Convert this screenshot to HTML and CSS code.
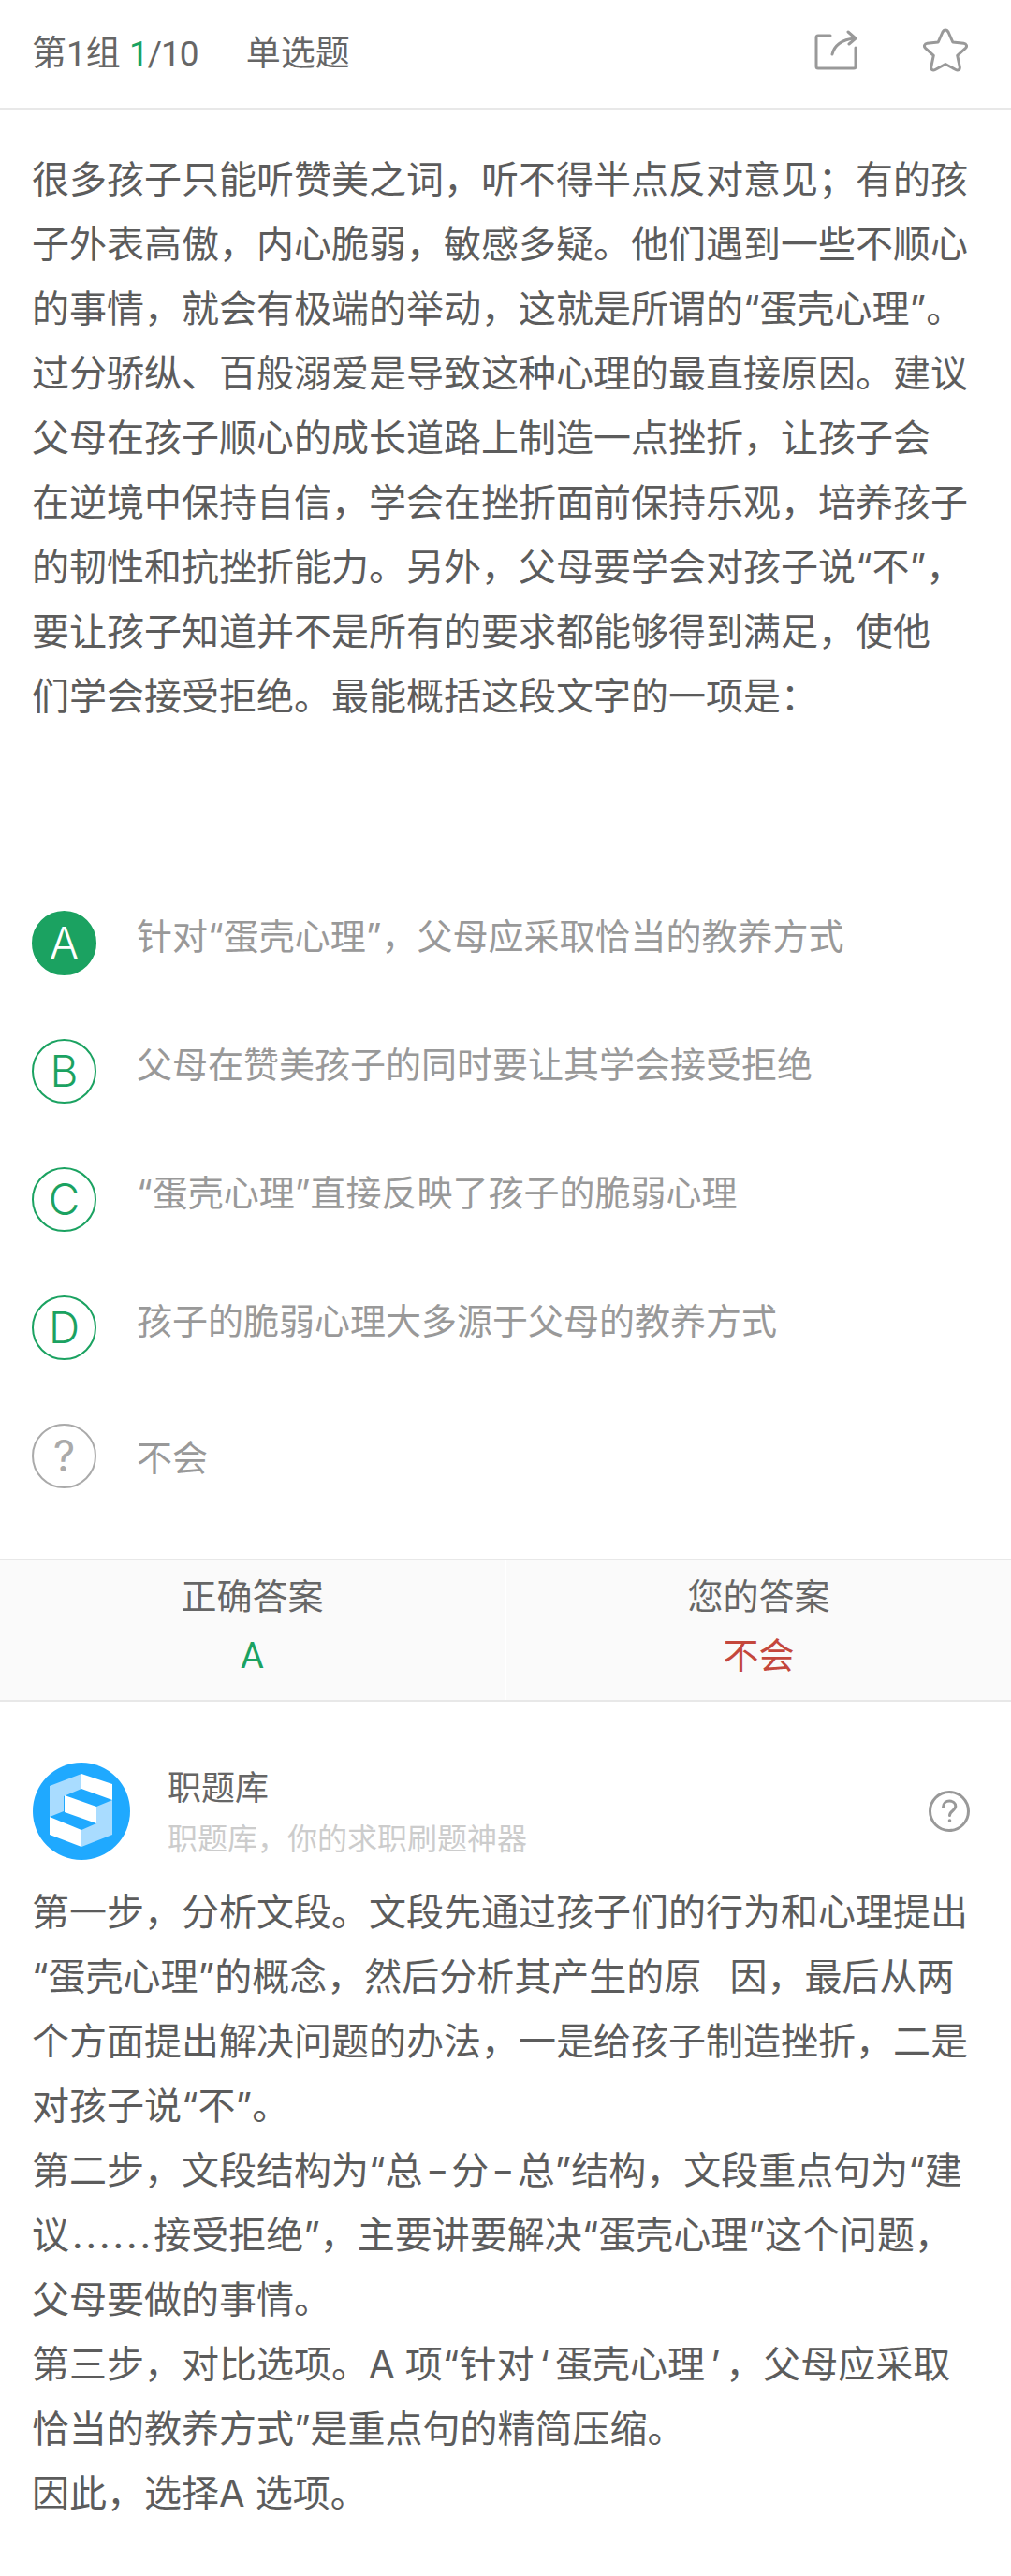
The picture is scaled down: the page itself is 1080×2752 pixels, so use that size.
FILE: index.html
```html
<!DOCTYPE html>
<html lang="zh-CN">
<head>
    <meta charset="UTF-8">
    <meta name="viewport" content="width=device-width, initial-scale=1.0">
    <title>第1组 单选题</title>
    <link rel="stylesheet" href="styles.css">
</head>
<body>

    <div class="top-bar">
        <div class="top-title">第1组 <span class="progress"><em>1</em>/10</span><span class="kind">单选题</span></div>
        <div class="top-icons">
            <svg class="share-icon" viewBox="0 0 46 44" width="46" height="44">
                <path d="M17 6H4a2 2 0 0 0-2 2v31a2 2 0 0 0 2 2h38a2 2 0 0 0 2-2V19"/>
                <path d="M19 26c2-9 10-16 24-17"/>
                <path d="M36 2l8 7-7 6"/>
            </svg>
            <svg class="star-icon" viewBox="0 0 52 50" width="52" height="50">
                <path d="M26 3c1.500 0 2.500 1 3.200 2.500l4.600 10.500 11.700 1.300c3 .4 4 3 2 5l-8.800 8 2.500 12c.6 3-1.600 4.600-4.200 3.200L26 39.500 15 45.500c-2.600 1.400-4.800-.2-4.200-3.200l2.500-12-8.800-8c-2-2-1-4.600 2-5l11.700-1.300 4.600-10.500C23.500 4 24.500 3 26 3z"/>
            </svg>
        </div>
    </div>

    <p class="question">很多孩子只能听赞美之词，听不得半点反对意见；有的孩<br>子外表高傲，内心脆弱，敏感多疑。他们遇到一些不顺心<br>的事情，就会有极端的举动，这就是所谓的“蛋壳心理”。<br>过分骄纵、百般溺爱是导致这种心理的最直接原因。建议<br>父母在孩子顺心的成长道路上制造一点挫折，让孩子会<br>在逆境中保持自信，学会在挫折面前保持乐观，培养孩子<br>的韧性和抗挫折能力。另外，父母要学会对孩子说“不”，<br>要让孩子知道并不是所有的要求都能够得到满足，使他<br>们学会接受拒绝。最能概括这段文字的一项是：</p>

    <div class="options">
        <div class="option">
            <span class="letter letter-on">A</span>
            <span class="option-text">针对“蛋壳心理”，父母应采取恰当的教养方式</span>
        </div>
        <div class="option">
            <span class="letter">B</span>
            <span class="option-text">父母在赞美孩子的同时要让其学会接受拒绝</span>
        </div>
        <div class="option">
            <span class="letter">C</span>
            <span class="option-text">“蛋壳心理”直接反映了孩子的脆弱心理</span>
        </div>
        <div class="option">
            <span class="letter">D</span>
            <span class="option-text">孩子的脆弱心理大多源于父母的教养方式</span>
        </div>
        <div class="option">
            <span class="letter letter-unknown">?</span>
            <span class="option-text option-text-low">不会</span>
        </div>
    </div>

    <div class="answers">
        <div class="answer">
            <div class="answer-label">正确答案</div>
            <div class="answer-right">A</div>
        </div>
        <div class="answer">
            <div class="answer-label">您的答案</div>
            <div class="answer-wrong">不会</div>
        </div>
    </div>

    <div class="source">
        <svg class="logo" viewBox="0 0 104 104" width="104" height="104">
            <circle cx="52" cy="52" r="52" fill="#1fa9ff"/>
            <polygon fill="#a9dcff" points="18,25 52,12 52,28 33,36 33,52 18,58"/>
            <polygon fill="#fff" points="52,12 85,23 85,40 52,28"/>
            <polygon fill="#fff" points="34,35 68,47 68,65 34,53"/>
            <polygon fill="#a9dcff" points="68,47 85,40 85,77 52,90 52,72 68,65"/>
            <polygon fill="#fff" points="18,58 52,72 52,90 18,77"/>
        </svg>
        <div class="source-info">
            <div class="source-name">职题库</div>
            <div class="source-desc">职题库，你的求职刷题神器</div>
        </div>
        <svg class="help-icon" viewBox="0 0 44 44" width="44" height="44">
            <circle cx="22" cy="22" r="20.500"/>
            <path d="M15.500 17.500c0-4 3-6.500 6.800-6.500 3.700 0 6.500 2.300 6.500 5.600 0 4.900-6.300 5-6.300 10"/>
            <circle class="help-dot" cx="22.500" cy="32" r="1.800"/>
        </svg>
    </div>

    <p class="explain">第一步，分析文段。文段先通过孩子们的行为和心理提出<br>“蛋壳心理”的概念，然后分析其产生的<span class="wide-gap">原 因</span>，最后从两<br>个方面提出解决问题的办法，一是给孩子制造挫折，二是<br>对孩子说“不”。<br>第二步，文段结构为“总<span class="dash">-</span>分<span class="dash">-</span>总”结构，文段重点句为“建<br>议<span class="dots">......</span>接受拒绝”，主要讲要解决“蛋壳心理”这个问题，<br>父母要做的事情。<br>第三步，对比选项。A 项“针对<span class="single-quote">‘</span>蛋壳心理<span class="single-quote">’</span>，父母应采取<br>恰当的教养方式”是重点句的精简压缩。<br>因此，选择A 选项。</p>

</body>
</html>
```

FILE: styles.css
```css
body {
    font-family: Inter, "Noto Sans CJK SC", sans-serif;
    background-color: #fff;
    color: #5c5c5c;
    margin: 0;
    text-spacing-trim: space-all;
}
.top-bar {
    display: flex;
    justify-content: space-between;
    align-items: center;
    height: 117px;
    padding: 0 44px 8px 34px;
    box-sizing: border-box;
    border-bottom: 2px solid #e8e8e8;
}
.top-title {
    font-family: Roboto, "Noto Sans CJK SC", sans-serif;
    font-size: 37px;
    color: #666;
}
.progress {
    letter-spacing: -1px;
}
.progress em {
    font-style: normal;
    color: #1ba261;
}
.kind {
    margin-left: 51px;
    letter-spacing: 0;
}
.top-icons {
    display: flex;
    align-items: center;
    gap: 68px;
}
.top-icons svg, .help-icon {
    fill: none;
    stroke: #999;
    stroke-width: 3;
    stroke-linecap: round;
    stroke-linejoin: round;
}
.question, .explain {
    font-size: 40px;
    line-height: 69px;
    margin: 0;
    padding: 0 34px;
    white-space: nowrap;
}
.question {
    padding-top: 40px;
}
.wide-gap {
    word-spacing: 19px;
}
.single-quote {
    margin: 0 6px;
}
.dash {
    display: inline-block;
    margin: 0 6px;
    font-weight: 500;
    transform: scaleX(1.300);
}
.dots {
    letter-spacing: 3px;
    margin-left: 3px;
}
.options {
    margin-top: 195px;
}
.option {
    display: flex;
    gap: 43px;
    height: 137px;
    padding-left: 34px;
}
.letter {
    width: 69px;
    height: 69px;
    border: 2px solid #1ba261;
    border-radius: 50%;
    box-sizing: border-box;
    color: #1ba261;
    font-size: 46px;
    font-weight: 300;
    line-height: 65px;
    text-align: center;
    flex-shrink: 0;
}
.letter-on {
    background-color: #1ba261;
    color: #fff;
}
.letter-unknown {
    border-color: #aaa;
    color: #aaa;
    font-weight: 400;
}
.option-text {
    font-size: 38px;
    line-height: 54px;
    color: #999;
}
.option-text-low {
    line-height: 72px;
}
.answers {
    display: flex;
    gap: 2px;
    margin-top: 7px;
    height: 149px;
    background-color: #fff;
    border-top: 2px solid #e8e8e8;
    border-bottom: 2px solid #e8e8e8;
}
.answer {
    flex: 1;
    background-color: #fafafa;
    text-align: center;
    font-size: 38px;
    line-height: 63px;
    padding-top: 7px;
}
.answer-label {
    color: #666;
}
.answer-right {
    font-family: Roboto, sans-serif;
    color: #1ba261;
    padding-top: 1px;
}
.answer-wrong {
    color: #c4473c;
}
.source {
    display: flex;
    align-items: flex-start;
    height: 104px;
    margin-top: 65px;
    padding: 0 44px 0 35px;
}
.logo {
    flex-shrink: 0;
}
.source-info {
    flex: 1;
    margin-left: 40px;
}
.source-name {
    font-size: 36px;
    line-height: 54px;
    color: #666;
}
.source-desc {
    font-size: 32px;
    line-height: 56px;
    color: #ccc;
}
.help-icon {
    align-self: center;
}
.help-icon .help-dot {
    fill: #999;
    stroke: none;
}
.explain {
    padding-top: 21px;
}
```
